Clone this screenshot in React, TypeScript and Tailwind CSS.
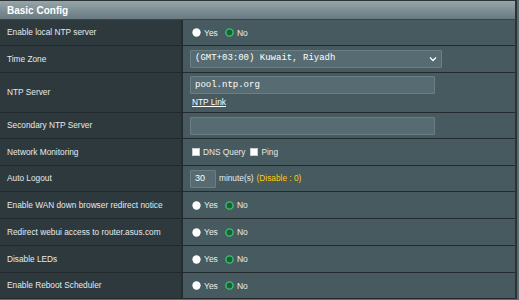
import type { ReactNode } from 'react'

const font = { fontFamily: '"Liberation Sans", Arial, sans-serif' }
const mono = { fontFamily: '"Liberation Mono", "Courier New", monospace' }

function Radio({ checked }: { checked?: boolean }) {
  return (
    <svg width="9" height="9" viewBox="0 0 10 10" className="shrink-0">
      {checked ? (
        <circle cx="5" cy="5" r="4" fill="#1d5f3a" stroke="#35c46a" strokeWidth="1.6" />
      ) : (
        <circle cx="5" cy="5" r="4.6" fill="#ffffff" />
      )}
    </svg>
  )
}

function YesNo() {
  return (
    <div className="flex items-center ml-[2px] text-[8.5px] text-[#e8eced]">
      <Radio />
      <span className="ml-[3px] mt-[1px]">Yes</span>
      <span className="ml-[7px]">
        <Radio checked />
      </span>
      <span className="ml-[3px] mt-[1px]">No</span>
    </div>
  )
}

function Check({ label }: { label: string }) {
  return (
    <div className="flex items-center">
      <span className="w-[8px] h-[8px] bg-white border border-[#ccc] shrink-0" />
      <span className="ml-[3px]">{label}</span>
    </div>
  )
}

function Row({ label, children, h }: { label: string; children: ReactNode; h: string }) {
  return (
    <div className={`grid grid-cols-[181px_1fr] border-b border-[#232a2d] ${h}`}>
      <div className="bg-[#2e393d] flex items-center pl-[7px] text-[8.3px] text-[#e6eaeb]">{label}</div>
      <div className="bg-[#475a5f] border-l-2 border-[#252d30] flex items-center pl-[7px] text-[8.3px] text-[#e6eaeb]">
        {children}
      </div>
    </div>
  )
}

const inputCls =
  'h-[18px] bg-[#576c72] border border-[#6a7e84] rounded-[1px] text-[9px] text-white flex items-center px-[4px]'

export default function App() {
  return (
    <div className="w-[519px] h-[300px] bg-[#5b6a6f] overflow-hidden" style={font}>
      <div className="w-[517px] border-t border-r-2 border-[#2b3336]">
        <div className="h-[19px] bg-gradient-to-b from-[#97a5aa] to-[#687a80] border-b border-[#3a4548] flex items-center pl-[7px] text-[10px] font-bold text-white">
          Basic Config
        </div>
        <Row label="Enable local NTP server" h="h-[26px]">
          <YesNo />
        </Row>
        <Row label="Time Zone" h="h-[27px]">
          <div className={`${inputCls} w-[252px] justify-between`} style={mono}>
            <span>(GMT+03:00) Kuwait, Riyadh</span>
            <svg width="8" height="6" viewBox="0 0 8 6">
              <path d="M1 1.5 L4 4.5 L7 1.5" fill="none" stroke="#fff" strokeWidth="1.3" />
            </svg>
          </div>
        </Row>
        <Row label="NTP Server" h="h-[40px]">
          <div className="flex flex-col">
            <div className={`${inputCls} w-[245px]`} style={mono}>
              pool.ntp.org
            </div>
            <a className="mt-[2px] ml-[2px] underline text-[8.3px] text-white">NTP Link</a>
          </div>
        </Row>
        <Row label="Secondary NTP Server" h="h-[26px]">
          <div className={`${inputCls} w-[245px]`} />
        </Row>
        <Row label="Network Monitoring" h="h-[27px]">
          <div className="flex items-center gap-[5px] ml-[2px]">
            <Check label="DNS Query" />
            <Check label="Ping" />
          </div>
        </Row>
        <Row label="Auto Logout" h="h-[26px]">
          <div className="flex items-center">
            <div className={`${inputCls} w-[26px] text-[8.5px]`}>30</div>
            <span className="ml-[3px]">minute(s)</span>
            <span className="ml-[3px] text-[#ffcc00]">(Disable : 0)</span>
          </div>
        </Row>
        <Row label="Enable WAN down browser redirect notice" h="h-[27px]">
          <YesNo />
        </Row>
        <Row label="Redirect webui access to router.asus.com" h="h-[27px]">
          <YesNo />
        </Row>
        <Row label="Disable LEDs" h="h-[27px]">
          <YesNo />
        </Row>
        <Row label="Enable Reboot Scheduler" h="h-[26px]">
          <YesNo />
        </Row>
      </div>
    </div>
  )
}
